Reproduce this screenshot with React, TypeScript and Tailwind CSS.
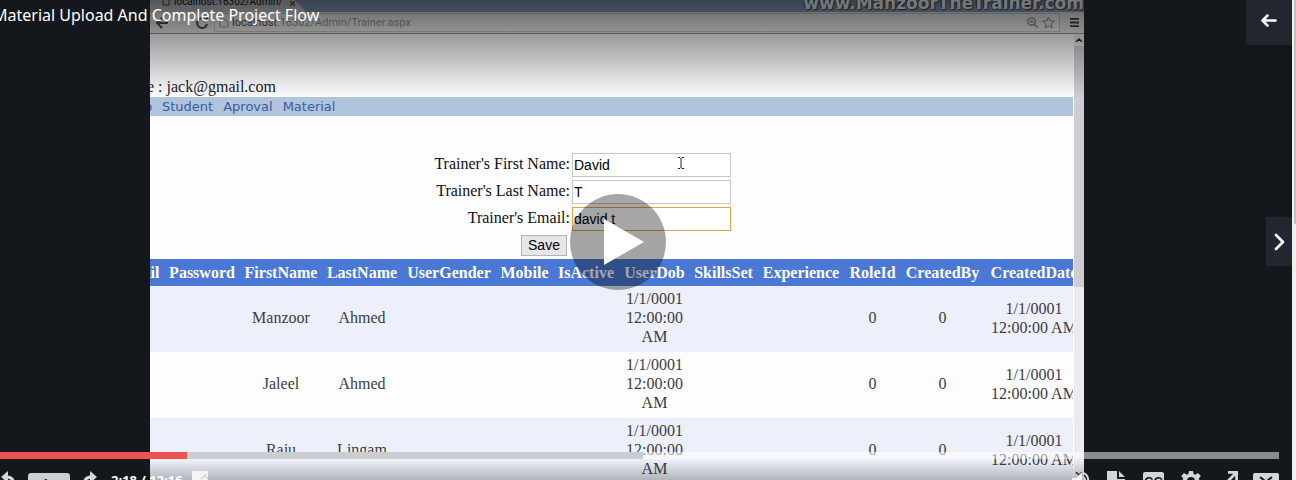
import React from "react";

const columns = [
  { name: "Email", width: "w-[50px]" },
  { name: "Password", width: "w-[76px]" },
  { name: "FirstName", width: "w-[82px]" },
  { name: "LastName", width: "w-[80px]" },
  { name: "UserGender", width: "w-[94px]" },
  { name: "Mobile", width: "w-[57px]" },
  { name: "IsActive", width: "w-[66px]" },
  { name: "UserDob", width: "w-[71px]" },
  { name: "SkillsSet", width: "w-[67px]" },
  { name: "Experience", width: "w-[88px]" },
  { name: "RoleId", width: "w-[55px]" },
  { name: "CreatedBy", width: "w-[85px]" },
  { name: "CreatedDate", width: "w-[98px]" },
];

const trainers = [
  { first: "Manzoor", last: "Ahmed" },
  { first: "Jaleel", last: "Ahmed" },
  { first: "Raju", last: "Lingam" },
];

function BrowserChrome() {
  return (
    <div className="font-['Roboto','Open_Sans',sans-serif]">
      <div className="flex h-3 items-end bg-[#8fa8cc]">
        <div className="flex h-3 w-[156px] items-start gap-1 bg-[#d5d9df] pl-3 [clip-path:polygon(0_0,93%_0,100%_100%,0_100%)]">
          <svg className="h-[6px] w-2" viewBox="0 0 8 6" fill="none" stroke="#555"><path d="M1 0v5h6V0" /></svg>
          <span className="-mt-1 w-[112px] text-[10px] leading-3 text-[#222]">localhost:16302/Admin/</span>
          <svg className="mt-px size-[5px]" viewBox="0 0 6 6" fill="none" stroke="#555" strokeWidth="1.5"><path d="m0 0 6 6M6 0 0 6" /></svg>
        </div>
      </div>
      <div className="flex h-[22px] items-center border-b border-[#999] bg-[#eeeef0] pr-1">
        <div className="flex w-16 shrink-0 items-center gap-6 pl-1 text-[#555]">
          <svg className="size-4" viewBox="0 0 16 16" fill="none" stroke="currentColor" strokeWidth="2"><path d="M14 8H4M8 3 3 8l5 5" /></svg>
          <svg className="size-4" viewBox="0 0 16 16" fill="none" stroke="currentColor" strokeWidth="2"><path d="M13 9a5 5 0 1 1-2-5M13 1v4H9" /></svg>
        </div>
        <div className="flex h-[19px] min-w-0 flex-1 items-center border border-[#ccc] bg-[#f4f4f6] px-1">
          <svg className="mr-[3px] size-[10px]" viewBox="0 0 10 10" fill="none" stroke="#999"><path d="M1 1h5l3 3v5H1z" /></svg>
          <span className="flex-1 text-[11px] leading-4 text-[#999]"><span className="text-[#555]">localhost</span>:16302/Admin/Trainer.aspx</span>
          <svg className="mr-1 size-[11px]" viewBox="0 0 11 11" fill="none" stroke="#888" strokeWidth="1.3"><circle cx="4.5" cy="4.5" r="3.7" /><path d="m7.2 7.2 3.3 3.3M3 4.5h3" /></svg>
          <svg className="size-[13px]" viewBox="0 0 13 13" fill="none" stroke="#888"><path d="m6.5 1 1.6 3.8 4.1.4-3.1 2.7.9 4-3.5-2.1L3 11.9l.9-4L.8 5.2l4.1-.4z" /></svg>
        </div>
        <svg className="mr-px ml-[10px] size-[9px]" viewBox="0 0 10 10" fill="#444"><path d="M0 0h10v2H0zM0 4h10v2H0zM0 8h10v2H0z" /></svg>
      </div>
    </div>
  );
}

const fieldClass = "h-6 w-[159px] border bg-white px-px font-['Liberation_Sans',sans-serif] text-[14px] text-black outline-none";

const fields = [
  { id: "first", label: "Trainer's First Name:", value: "David", border: "border-[#c8c6cc]" },
  { id: "last", label: "Trainer's Last Name:", value: "T", border: "border-[#c8c6cc]" },
  { id: "email", label: "Trainer's Email:", value: "david.t", border: "border-[#dba83c]" },
];

function TrainerForm() {
  return (
    <form className="relative pt-9 pl-[283px]" onSubmit={(e) => e.preventDefault()}>
      <div className="flex flex-col gap-[3px] text-[#111]">
        {fields.map((f) => (
          <div key={f.id} className="flex gap-[2px]">
            <label htmlFor={f.id} className="w-[137px] pt-px text-right whitespace-nowrap">{f.label}</label>
            <input id={f.id} className={`${fieldClass} ${f.border}`} defaultValue={f.value} />
          </div>
        ))}
      </div>
      <button className="mt-1 ml-[88px] block h-[21px] w-[46px] border border-[#b5b5b8] bg-[#e6e6e8] font-['Liberation_Sans',sans-serif] text-[14px] leading-[19px] text-black">Save</button>
      <svg className="absolute top-10 left-[527px] h-3 w-2" viewBox="0 0 8 12" fill="none" stroke="#222"><path d="M1 .5h2l1 1 1-1h2M4 1.500v9M1 11.500h2l1-1 1 1h2" /></svg>
    </form>
  );
}

function TrainerTable() {
  return (
    <table className="-ml-[36px] w-[969px] table-fixed border-collapse text-center">
      <thead>
        <tr className="h-[27px] bg-[#4a78d4] text-white">
          {columns.map((c) => (
            <th key={c.name} className={`${c.width} p-0 font-bold`}><span className="flex justify-center whitespace-nowrap">{c.name}</span></th>
          ))}
        </tr>
      </thead>
      <tbody className="text-[#3c3c42]">
        {trainers.map((t) => (
          <tr key={t.first} className="h-[66px] odd:bg-[#edf0fa] even:bg-[#fefdfe]">
            <td /><td />
            <td className="p-0 pb-[3px]">{t.first}</td>
            <td className="p-0 pb-[3px]">{t.last}</td>
            <td /><td /><td />
            <td className="p-0 pb-[3px]">1/1/0001<br />12:00:00<br />AM</td>
            <td /><td />
            <td className="p-0 pb-[3px]">0</td>
            <td className="p-0 pb-[3px]">0</td>
            <td className="p-0 pb-[3px] whitespace-nowrap">1/1/0001<br />12:00:00 AM</td>
          </tr>
        ))}
      </tbody>
    </table>
  );
}

function VideoFrame() {
  return (
    <div className="relative h-full min-w-0 flex-1 overflow-hidden bg-[#fdfcfe] font-['Liberation_Serif',serif] text-[16px] leading-[19px]">
      <BrowserChrome />
      <div className="flex">
        <div className="min-w-0 flex-1 overflow-hidden">
          <p className="-ml-[3px] pt-[43px] pb-[1px] text-[#222]">e : jack@gmail.com</p>
          <nav className="flex h-[19px] items-center gap-[10px] bg-[#b0c4de] font-['DejaVu_Sans',sans-serif] text-[13px] text-[#3a5ba0]">
            <span className="-ml-[6px] w-2">p</span>
            <a href="#student">Student</a>
            <a href="#aproval">Aproval</a>
            <a href="#material">Material</a>
          </nav>
          <div className="pt-[1px]"><TrainerForm /></div>
          <div className="pt-[3px]"><TrainerTable /></div>
        </div>
        <div className="flex h-[446px] w-[11px] shrink-0 flex-col items-center border-l border-white bg-[#ececee]">
          <svg className="my-1 h-1 w-2" viewBox="0 0 8 4" fill="none" stroke="#333" strokeWidth="1.500"><path d="m1 4 3-3 3 3" /></svg>
          <div className="h-[241px] w-full bg-[#cfcdd1]" />
          <svg className="mt-auto mb-1 h-1 w-2" viewBox="0 0 8 4" fill="none" stroke="#333" strokeWidth="1.500"><path d="m1 0 3 3 3-3" /></svg>
        </div>
      </div>
      <div className="pointer-events-none absolute inset-x-0 top-0 h-[98px] bg-linear-to-b from-black/60 to-transparent" />
      <div className="pointer-events-none absolute inset-x-0 bottom-0 h-5 bg-linear-to-b from-transparent to-black/25" />
      <span className="absolute top-[-7px] right-0 font-['DejaVu_Sans',sans-serif] text-[17px] leading-5 font-bold text-[#74777c] [text-shadow:1px_1px_1px_#222,-1px_-1px_1px_#222]">www.ManzoorTheTrainer.com</span>
    </div>
  );
}

function Controls() {
  return (
    <div className="absolute inset-x-0 bottom-0 h-7 text-[#d3d6da]">
      <div className="mr-[13px] flex h-[7px]">
        <div className="w-[187px] bg-[#ec5252]" />
        <div className="w-[456px] bg-[#cbced1]" />
        <div className="flex-1 bg-white/50" />
      </div>
      <div className="flex h-[21px] items-start justify-between overflow-hidden pt-3 pr-[13px]">
        <div className="flex items-start">
          <button aria-label="Rewind">
            <svg className="h-5 w-[15px]" viewBox="0 0 15 20" fill="none"><path d="M1 6 8 0v12z" fill="currentColor" /><path d="M7 6c4 0 6.500 2 6.500 7s-3 5-6 5" stroke="currentColor" strokeWidth="3" /></svg>
          </button>
          <button className="mt-[2px] ml-[13px] h-5 w-[42px] rounded-[3px] bg-[#cbced3] font-['Open_Sans',sans-serif] text-[13px] leading-[14px] font-semibold text-[#14171c]">1x</button>
          <button aria-label="Forward" className="ml-[13px]">
            <svg className="h-5 w-[15px]" viewBox="0 0 15 20" fill="none"><path d="M14 6 7 0v12z" fill="currentColor" /><path d="M8 6c-4 0-6.500 2-6.500 7s3 5 6 5" stroke="currentColor" strokeWidth="3" /></svg>
          </button>
          <span className="ml-[13px] w-[81px] font-['Open_Sans',sans-serif] text-[13px] leading-[18px] font-bold whitespace-nowrap text-white">2:18 / 12:16</span>
          <button aria-label="Notes" className="text-[#f4f4f5]">
            <svg className="h-5 w-4" viewBox="0 0 16 20"><path d="M0 0h16v20H0z" fill="currentColor" /><path d="m9 8 5-5M13 5l3 3" stroke="#d5d8dd" strokeWidth="1.500" /></svg>
          </button>
        </div>
        <div className="flex items-start">
          <button aria-label="Volume">
            <svg className="h-5 w-[18px]" viewBox="0 0 18 20" fill="none"><path d="M0 7h4l6-6v18l-6-6H0z" fill="#f4f4f5" /><path d="M11 2c7 2 7 14 0 16M11 6c3 1 3 7 0 8" stroke="currentColor" strokeWidth="2" /></svg>
          </button>
          <button aria-label="Resources" className="ml-[17px]">
            <svg className="h-5 w-[18px]" viewBox="0 0 18 20" fill="currentColor"><path d="M0 0h10v8h8v12H0zM12 0l6 6h-6z" /></svg>
          </button>
          <button aria-label="Captions" className="mt-[1px] ml-[18px] h-5 w-[21px] rounded-[2px] bg-[#d3d6da] font-['Liberation_Sans',sans-serif] text-[13px] leading-[18px] font-bold text-[#14171c]">CC</button>
          <button aria-label="Settings" className="ml-[17px]">
            <svg className="size-5" viewBox="0 0 20 20" fill="currentColor"><path fillRule="evenodd" d="M8 0h4l.6 3 1.800.8L17 2l2.800 3-2 2.500.5 1.500H20v4h-2.500l-1 2 1.500 2-3 3-2.500-2-1 2h-3l-1-2L5 20l-3-3 1.500-2-1-2H0V9h1.700l.5-1.500-2-2.500L3 2l2.600 1.800L7.400 3zM10 6a4 4 0 1 0 0 8 4 4 0 0 0 0-8z" /></svg>
          </button>
          <button aria-label="Expand" className="ml-[24px]">
            <svg className="h-5 w-[13px]" viewBox="0 0 13 20" fill="none" stroke="currentColor" strokeWidth="2.800"><path d="M3 1.400h8.600V10M11 2 1 12" /></svg>
          </button>
          <button aria-label="Full screen" className="mt-[2px] ml-[15px]">
            <svg className="h-5 w-[26px]" viewBox="0 0 26 20"><rect width="26" height="20" rx="2" fill="currentColor" /><path d="m7 4 5 4M19 4l-5 4" stroke="#14171c" strokeWidth="2" /></svg>
          </button>
        </div>
      </div>
    </div>
  );
}

export default function App() {
  return (
    <main className="flex h-screen overflow-hidden bg-[#14171c]">
      <div className="relative flex min-w-0 flex-1 overflow-hidden pr-[208px] pl-[150px]">
        <VideoFrame />
        <h1 className="absolute top-[5px] -left-[7px] font-['Noto_Sans','Open_Sans',sans-serif] text-[16px] leading-5 whitespace-nowrap text-white">Material Upload And Complete Project Flow</h1>
        <button aria-label="Play" className="absolute top-[194px] left-1/2 ml-[-76px] flex size-24 items-center justify-center rounded-full bg-black/35">
          <svg className="ml-3 h-[46px] w-10" viewBox="0 0 40 46" fill="#fff"><path d="M0 0 40 23 0 46z" /></svg>
        </button>
        <button aria-label="Back to course" className="absolute top-0 right-0 flex h-[45px] w-[46px] items-center justify-center bg-[#22272f]">
          <svg className="mt-[-4px] h-[13px] w-4" viewBox="0 0 16 13" fill="none" stroke="#fff" strokeWidth="2.500" strokeLinecap="round" strokeLinejoin="round"><path d="M14.500 6.500H2M6.500 1.500l-5 5 5 5" /></svg>
        </button>
        <button aria-label="Next lecture" className="absolute top-[217px] right-0 flex h-[49px] w-[26px] items-center justify-center bg-[#22272f]">
          <svg className="h-[18px] w-[11px]" viewBox="0 0 11 18" fill="none" stroke="#fff" strokeWidth="2.800" strokeLinecap="round" strokeLinejoin="round"><path d="m2 2 7 7-7 7" /></svg>
        </button>
        <Controls />
      </div>
      <div className="flex w-1 justify-end bg-[#f0f0f0]">
        <div className="h-56 w-[2px] bg-[#c1c1c3]" />
      </div>
    </main>
  );
}
